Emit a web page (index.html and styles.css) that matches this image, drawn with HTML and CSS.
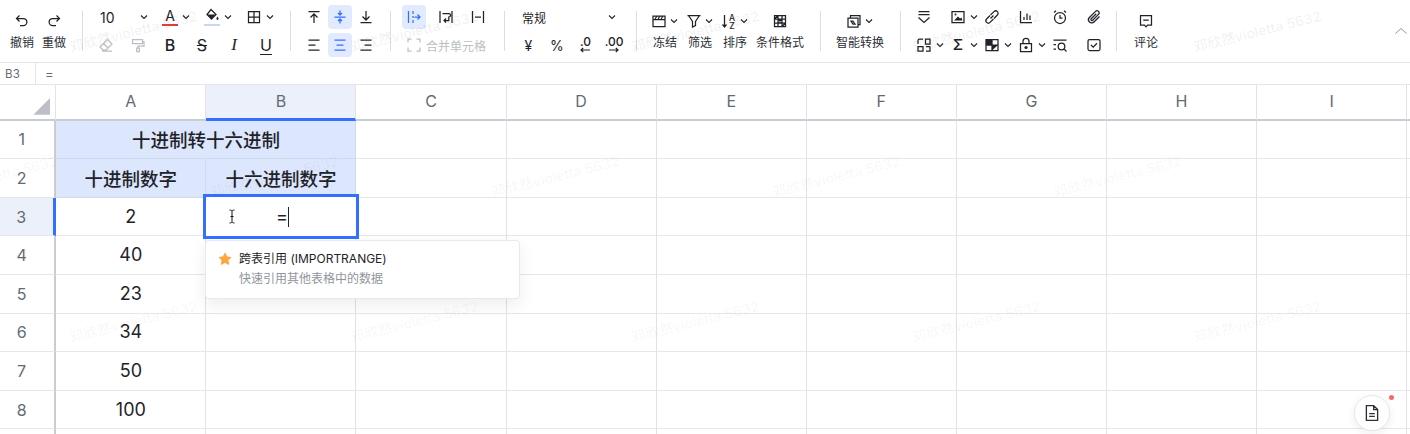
FILE: index.html
```html
<!DOCTYPE html>
<html lang="zh">
<head>
<meta charset="utf-8">
<title>十进制转十六进制</title>
<link rel="stylesheet" href="styles.css">
</head>
<body>
<svg class="defs" aria-hidden="true">
  <symbol id="chev" viewBox="0 0 10 10"><path d="M2 3.500 5 6.500 8 3.500"/></symbol>
  <symbol id="undo" viewBox="0 0 16 16"><path d="M5.500 2.500 2.500 5.500l3 3M3 5.500h6.300a3.600 3.600 0 0 1 0 7.200H6"/></symbol>
  <symbol id="redo" viewBox="0 0 16 16"><path d="M10.500 2.500l3 3-3 3M13 5.500H6.700a3.600 3.600 0 0 0 0 7.200H10"/></symbol>
  <symbol id="bucket" viewBox="0 0 16 16"><path d="M7 1.500 12 6.500 7.500 11 3 6.500z"/><path class="solid" d="M3.500 6.500h8L7.500 10.500z"/><path class="solid" d="M13.500 8.500c.8 1.200 1.100 1.800 1.100 2.300a1.100 1.100 0 0 1-2.200 0c0-.5.300-1.100 1.100-2.300z"/></symbol>
  <symbol id="grid" viewBox="0 0 16 16"><path d="M2.500 2.500h11v11h-11zM8 2.500v11M2.500 8h11"/></symbol>
  <symbol id="eraser" viewBox="0 0 16 16"><path d="M9.500 2.500 14 7l-6 6H5L2 10zM5.500 6.500l4.500 4.500M4 14h10"/></symbol>
  <symbol id="painter" viewBox="0 0 16 16"><path d="M2.500 2.500h10v4h-10zM12.500 4.500h1.500v4.500H8v2M6.700 11h2.600v3.500H6.700z"/></symbol>
  <symbol id="a-top" viewBox="0 0 16 16"><path d="M2.500 2.500h11M8 14V5M4.500 8.500 8 5l3.500 3.500"/></symbol>
  <symbol id="a-mid" viewBox="0 0 16 16"><path d="M2.500 8h11M8 1.500V6M6 4l2 2 2-2M8 14.500V10M6 12l2-2 2 2"/></symbol>
  <symbol id="a-bot" viewBox="0 0 16 16"><path d="M2.500 13.500h11M8 2v9M4.500 7.500 8 11l3.500-3.500"/></symbol>
  <symbol id="t-left" viewBox="0 0 16 16"><path d="M2.500 3h11M2.500 8h7M2.500 13h11"/></symbol>
  <symbol id="t-center" viewBox="0 0 16 16"><path d="M2.500 3h11M4.500 8h7M2.500 13h11"/></symbol>
  <symbol id="t-right" viewBox="0 0 16 16"><path d="M2.500 3h11M6.500 8h7M2.500 13h11"/></symbol>
  <symbol id="overflow" viewBox="0 0 16 16"><path d="M2.500 2v12M7 2v3M7 7v2M7 11v3M8.500 8h5.500M11.500 5.500 14 8l-2.500 2.500"/></symbol>
  <symbol id="wrap" viewBox="0 0 16 16"><path d="M2 2v12M14 2v12M4.500 4.500h6.300a1.700 1.700 0 0 1 0 3.500V11.500H6M8 9.500 6 11.500l2 2"/></symbol>
  <symbol id="clip" viewBox="0 0 16 16"><path d="M2.500 2v12M13.500 2v12M5 8h6"/></symbol>
  <symbol id="merge" viewBox="0 0 16 16"><path d="M2 5.500V2h3.500M10.500 2H14v3.500M2 10.500V14h3.500M14 10.500V14h-3.500"/></symbol>
  <symbol id="arr-left" viewBox="0 0 12 6"><path d="M11 3H2M4.200 1 2 3l2.200 2"/></symbol>
  <symbol id="arr-right" viewBox="0 0 12 6"><path d="M1 3h9M7.800 1 10 3 7.800 5"/></symbol>
  <symbol id="freeze" viewBox="0 0 16 16"><path d="M2 3h12v10.500H2zM2 6.500h12M4 6l2-3M7 6l2-3M10 6l2-3"/></symbol>
  <symbol id="filter" viewBox="0 0 16 16"><path d="M1.500 2.500h13M2.500 2.500 6.500 8.500v5.500l3-1.500V8.500l4-6"/></symbol>
  <symbol id="cond" viewBox="0 0 16 16"><path d="M2.500 2.500h11v11h-11zM6 2.500v11M10 2.500v11M2.500 6h11M2.500 10h11M6 6l4 4M10 6l-4 4M2.500 6 6 2.500M10 13.500l3.500-3.500"/></symbol>
  <symbol id="smart" viewBox="0 0 16 16"><path d="M2 5h10v9H2zM4.500 5V2.500H14V11.500H12"/><path d="M5 8h2l2 3h-2z"/></symbol>
  <symbol id="fold" viewBox="0 0 16 16"><path d="M2.500 2.500h11M2.500 5.500h11M2.500 8.500l5.500 5 5.500-5"/></symbol>
  <symbol id="image" viewBox="0 0 16 16"><path d="M2 2.500h12v11H2z"/><path class="solid" d="M4 11.500 8 7.500l2 2 1.500-1 1 3z"/><circle class="solid" cx="5.500" cy="5.500" r="1"/></symbol>
  <symbol id="link" viewBox="0 0 16 16"><path d="M6.500 6 10 2.600a2.400 2.400 0 0 1 3.400 3.400L10 9.500M9.500 10 6 13.400A2.400 2.400 0 0 1 2.600 10L6 6.500M6.500 9.500 9.500 6.500"/></symbol>
  <symbol id="chart" viewBox="0 0 16 16"><path d="M2.500 2v11.500h11.500M6 11V8M9 11V4.500M12 11V6.500"/></symbol>
  <symbol id="alarm" viewBox="0 0 16 16"><circle cx="8" cy="9" r="5.500"/><path d="M8 6v3h2.500M2 3.500 4 1.800M14 3.500 12 1.800"/></symbol>
  <symbol id="clip-file" viewBox="0 0 16 16"><path d="M13.500 7.500 8 13a3.200 3.200 0 0 1-4.600-4.500L9.500 2.400a2.100 2.100 0 0 1 3 3L6.700 11.200a1 1 0 0 1-1.500-1.400L10.300 4.700"/></symbol>
  <symbol id="blocks" viewBox="0 0 16 16"><path d="M2 9.500h5v4.500H2zM10 9.500h4M14 9.500V14h-4M9.500 7V2H14v5zM2 7V3.500A1.500 1.500 0 0 1 3.500 2H7"/></symbol>
  <symbol id="check-grid" viewBox="0 0 16 16"><path d="M2 2.500h12v11H2zM8 2.500v11M2 8h12"/><path class="solid" d="M2 2.500h6V8H2zM8 8h6l-6 5.500z"/></symbol>
  <symbol id="lock" viewBox="0 0 16 16"><path d="M2.500 6.500h11v8h-11zM5 6.500V4.300a3 3 0 0 1 6 0v2.200"/><circle class="solid" cx="8" cy="10.500" r="1.600"/></symbol>
  <symbol id="find" viewBox="0 0 16 16"><path d="M1.500 3h13M1.500 7.500h2.500M1.500 12h2.500M12.300 12.300l2.200 2.200"/><circle cx="9.500" cy="9.500" r="3.300"/></symbol>
  <symbol id="checkbox" viewBox="0 0 16 16"><rect x="2" y="2.500" width="12" height="11" rx="1.500"/><path d="M5 8l2.200 2.200L11 6.300"/></symbol>
  <symbol id="comment" viewBox="0 0 16 16"><path d="M2.500 2.500h11v9.500H9.500L8 13.800 6.500 12h-4zM5.200 7.200h5.600"/></symbol>
  <symbol id="up" viewBox="0 0 14 14"><path d="M1.500 9.500 7 4.500l5.500 5"/></symbol>
  <symbol id="doc" viewBox="0 0 16 16"><path d="M3 1.500h6.500L13 5v9.500H3zM9.500 1.500V5H13M5.500 8.500h5M5.500 11h5"/></symbol>
  <symbol id="star" viewBox="0 0 16 16"><path class="star-fill" d="M8 1.200l2.100 4.300 4.700.7-3.400 3.300.8 4.700L8 12l-4.200 2.200.8-4.700L1.200 6.200l4.700-.7z"/></symbol>
  <symbol id="ibeam" viewBox="0 0 10 16"><path d="M2.500 1.500c1.500 0 2 .3 2.500 1 .5-.7 1-1 2.500-1M5 2.500v11M2.500 14.500c1.500 0 2-.3 2.500-1 .5.700 1 1 2.500 1M3.500 8h3"/></symbol>
</svg>

<div class="app">
  <header class="toolbar">
    <div class="group g-history labeled">
      <div class="cmd"><span class="cmd-icon"><svg class="i"><use href="#undo"/></svg></span><span class="cmd-label">撤销</span></div>
      <div class="cmd"><span class="cmd-icon"><svg class="i"><use href="#redo"/></svg></span><span class="cmd-label">重做</span></div>
    </div>
    <i class="sep"></i>
    <div class="group g-font rows">
      <div class="row">
        <div class="font-size"><span>10</span><svg class="chev"><use href="#chev"/></svg></div>
        <div class="pick"><span class="color-a">A</span><svg class="chev"><use href="#chev"/></svg></div>
        <div class="pick"><span class="fill"><svg class="i"><use href="#bucket"/></svg></span><svg class="chev"><use href="#chev"/></svg></div>
        <div class="pick"><svg class="i"><use href="#grid"/></svg><svg class="chev"><use href="#chev"/></svg></div>
      </div>
      <div class="row">
        <div class="btn w32 muted"><svg class="i"><use href="#eraser"/></svg></div>
        <div class="btn w32 muted"><svg class="i"><use href="#painter"/></svg></div>
        <div class="btn w32 fmt bold">B</div>
        <div class="btn w32 fmt strike">S</div>
        <div class="btn w32 fmt ital">I</div>
        <div class="btn w32 fmt under">U</div>
      </div>
    </div>
    <i class="sep"></i>
    <div class="group g-align rows">
      <div class="row gap2">
        <div class="btn"><svg class="i"><use href="#a-top"/></svg></div>
        <div class="btn on"><svg class="i"><use href="#a-mid"/></svg></div>
        <div class="btn"><svg class="i"><use href="#a-bot"/></svg></div>
      </div>
      <div class="row gap2">
        <div class="btn"><svg class="i"><use href="#t-left"/></svg></div>
        <div class="btn on"><svg class="i"><use href="#t-center"/></svg></div>
        <div class="btn"><svg class="i"><use href="#t-right"/></svg></div>
      </div>
    </div>
    <i class="sep"></i>
    <div class="group g-wrap rows">
      <div class="row gap8">
        <div class="btn on"><svg class="i"><use href="#overflow"/></svg></div>
        <div class="btn"><svg class="i"><use href="#wrap"/></svg></div>
        <div class="btn"><svg class="i"><use href="#clip"/></svg></div>
      </div>
      <div class="row">
        <div class="btn muted"><svg class="i"><use href="#merge"/></svg></div>
        <span class="merge-label">合并单元格</span>
      </div>
    </div>
    <i class="sep"></i>
    <div class="group g-number rows">
      <div class="row">
        <div class="num-format"><span>常规</span><svg class="chev"><use href="#chev"/></svg></div>
      </div>
      <div class="row">
        <div class="btn w-num sym">¥</div>
        <div class="btn w-num sym">%</div>
        <div class="btn w-num dec"><span>.0</span><svg class="arr"><use href="#arr-left"/></svg></div>
        <div class="btn w-num dec"><span>.00</span><svg class="arr"><use href="#arr-right"/></svg></div>
      </div>
    </div>
    <i class="sep"></i>
    <div class="group g-data labeled">
      <div class="cmd w35"><span class="cmd-icon"><svg class="i"><use href="#freeze"/></svg><svg class="chev"><use href="#chev"/></svg></span><span class="cmd-label">冻结</span></div>
      <div class="cmd w35"><span class="cmd-icon"><svg class="i"><use href="#filter"/></svg><svg class="chev"><use href="#chev"/></svg></span><span class="cmd-label">筛选</span></div>
      <div class="cmd w35"><span class="cmd-icon"><svg class="i" viewBox="0 0 16 16"><path d="M3.500 2v12M1.500 11.500 3.500 14l2-2.500"/><text class="sort-letter" x="11" y="7.500">A</text><text class="sort-letter" x="11" y="15.500">Z</text></svg><svg class="chev"><use href="#chev"/></svg></span><span class="cmd-label">排序</span></div>
      <div class="cmd w55"><span class="cmd-icon"><svg class="i"><use href="#cond"/></svg></span><span class="cmd-label">条件格式</span></div>
    </div>
    <i class="sep"></i>
    <div class="group g-smart labeled">
      <div class="cmd w-full"><span class="cmd-icon"><svg class="i"><use href="#smart"/></svg><svg class="chev"><use href="#chev"/></svg></span><span class="cmd-label">智能转换</span></div>
    </div>
    <i class="sep"></i>
    <div class="group g-insert rows">
      <div class="row">
        <div class="ins"><svg class="i"><use href="#fold"/></svg></div>
        <div class="ins"><svg class="i"><use href="#image"/></svg><svg class="chev"><use href="#chev"/></svg></div>
        <div class="ins"><svg class="i"><use href="#link"/></svg></div>
        <div class="ins"><svg class="i"><use href="#chart"/></svg></div>
        <div class="ins"><svg class="i"><use href="#alarm"/></svg></div>
        <div class="ins"><svg class="i"><use href="#clip-file"/></svg></div>
      </div>
      <div class="row">
        <div class="ins"><svg class="i"><use href="#blocks"/></svg><svg class="chev"><use href="#chev"/></svg></div>
        <div class="ins"><span class="sigma">Σ</span><svg class="chev"><use href="#chev"/></svg></div>
        <div class="ins"><svg class="i"><use href="#check-grid"/></svg><svg class="chev"><use href="#chev"/></svg></div>
        <div class="ins"><svg class="i"><use href="#lock"/></svg><svg class="chev"><use href="#chev"/></svg></div>
        <div class="ins"><svg class="i"><use href="#find"/></svg></div>
        <div class="ins"><svg class="i"><use href="#checkbox"/></svg></div>
      </div>
    </div>
    <i class="sep"></i>
    <div class="group g-comment labeled">
      <div class="cmd w-full"><span class="cmd-icon"><svg class="i"><use href="#comment"/></svg></span><span class="cmd-label">评论</span></div>
    </div>
    <svg class="collapse"><use href="#up"/></svg>
  </header>

  <div class="formula">
    <div class="name-box">B3</div>
    <div class="formula-text">=</div>
  </div>

  <main class="sheet">
    <div class="corner"><i class="corner-mark"></i></div>
    <div class="col">A</div><div class="col col-on">B</div><div class="col">C</div><div class="col">D</div><div class="col">E</div><div class="col">F</div><div class="col">G</div><div class="col">H</div><div class="col">I</div><div class="col"></div>

    <div class="rh">1</div><div class="c head span2">十进制转十六进制</div><div class="c"></div><div class="c"></div><div class="c"></div><div class="c"></div><div class="c"></div><div class="c"></div><div class="c"></div><div class="c"></div>
    <div class="rh">2</div><div class="c head">十进制数字</div><div class="c head">十六进制数字</div><div class="c"></div><div class="c"></div><div class="c"></div><div class="c"></div><div class="c"></div><div class="c"></div><div class="c"></div><div class="c"></div>
    <div class="rh rh-on">3</div><div class="c">2</div><div class="c"></div><div class="c"></div><div class="c"></div><div class="c"></div><div class="c"></div><div class="c"></div><div class="c"></div><div class="c"></div><div class="c"></div>
    <div class="rh">4</div><div class="c">40</div><div class="c"></div><div class="c"></div><div class="c"></div><div class="c"></div><div class="c"></div><div class="c"></div><div class="c"></div><div class="c"></div><div class="c"></div>
    <div class="rh">5</div><div class="c">23</div><div class="c"></div><div class="c"></div><div class="c"></div><div class="c"></div><div class="c"></div><div class="c"></div><div class="c"></div><div class="c"></div><div class="c"></div>
    <div class="rh">6</div><div class="c">34</div><div class="c"></div><div class="c"></div><div class="c"></div><div class="c"></div><div class="c"></div><div class="c"></div><div class="c"></div><div class="c"></div><div class="c"></div>
    <div class="rh">7</div><div class="c">50</div><div class="c"></div><div class="c"></div><div class="c"></div><div class="c"></div><div class="c"></div><div class="c"></div><div class="c"></div><div class="c"></div><div class="c"></div>
    <div class="rh">8</div><div class="c">100</div><div class="c"></div><div class="c"></div><div class="c"></div><div class="c"></div><div class="c"></div><div class="c"></div><div class="c"></div><div class="c"></div><div class="c"></div>
    <div class="rh"></div><div class="c"></div><div class="c"></div><div class="c"></div><div class="c"></div><div class="c"></div><div class="c"></div><div class="c"></div><div class="c"></div><div class="c"></div><div class="c"></div>
  </main>

  <div class="editor">
    <svg class="ibeam"><use href="#ibeam"/></svg>
    <span class="editor-text">=</span><i class="caret"></i>
  </div>

  <div class="suggest">
    <div class="suggest-title"><svg class="star"><use href="#star"/></svg><span>跨表引用 (IMPORTRANGE)</span></div>
    <div class="suggest-sub">快速引用其他表格中的数据</div>
  </div>

  <div class="fab">
    <svg class="fab-icon"><use href="#doc"/></svg>
    <i class="fab-dot"></i>
  </div>

  <div class="watermarks" aria-hidden="true">
    <div class="wm-row wm-a wm-top"><span>邓欣然violetta 5632</span><span>邓欣然violetta 5632</span><span>邓欣然violetta 5632</span><span>邓欣然violetta 5632</span><span>邓欣然violetta 5632</span></div>
    <div class="wm-row wm-b"><span>邓欣然violetta 5632</span><span>邓欣然violetta 5632</span><span>邓欣然violetta 5632</span><span>邓欣然violetta 5632</span><span>邓欣然violetta 5632</span></div>
    <div class="wm-row wm-a"><span>邓欣然violetta 5632</span><span>邓欣然violetta 5632</span><span>邓欣然violetta 5632</span><span>邓欣然violetta 5632</span><span>邓欣然violetta 5632</span></div>
  </div>
</div>
</body>
</html>
```

FILE: styles.css
```css
* { box-sizing: border-box; }
html, body { margin: 0; padding: 0; background: #fff; }
body {
  width: 1410px; height: 434px; overflow: hidden;
  font-family: Inter, "Noto Sans CJK SC", "Liberation Sans", sans-serif;
  color: #1f2329;
}
.defs { position: absolute; width: 0; height: 0; }
.app { position: relative; width: 1410px; height: 434px; overflow: hidden; }

/* toolbar */
.toolbar { display: flex; height: 63px; border-bottom: 1px solid #e4e5e8; background: #fff; }
.sep { flex: none; width: 1px; height: 40px; margin-top: 11px; background: #dcdee1; }
.group { flex: none; }
.i { width: 16px; height: 16px; flex: none; fill: none; stroke: #1f2329; stroke-width: 1.25; }
.chev { width: 10px; height: 10px; flex: none; fill: none; stroke: #1f2329; stroke-width: 1.1; }
.solid { fill: #1f2329; stroke: none; }

.labeled { display: flex; padding-top: 12px; }
.cmd { display: flex; flex-direction: column; align-items: center; width: 32px; flex: none; }
.cmd-icon { display: flex; align-items: center; justify-content: center; gap: 2px; height: 18px; }
.cmd-label { margin-top: 5px; font-size: 12px; line-height: 16px; color: #2b2f36; white-space: nowrap; }
.w35 { width: 35px; }
.w55 { width: 55px; }
.w-full { width: 100%; }

.rows { display: flex; flex-direction: column; gap: 4px; padding-top: 5px; }
.row { display: flex; height: 24px; align-items: center; }
.gap2 { gap: 2px; }
.gap8 { gap: 8px; }
.btn {
  display: flex; align-items: center; justify-content: center;
  width: 24px; height: 24px; border-radius: 4px; flex: none; font-size: 15px;
}
.w32 { width: 32px; }
.w-num { width: 28.6px; }
.on { background: #e1eaff; }
.on .i { stroke: #3370ff; }
.muted .i { stroke: #bbbfc4; }

.g-history { width: 82px; padding-left: 6px; }
.g-font { width: 207px; padding-left: 7px; }
.g-align { width: 99px; padding-left: 11px; }
.g-wrap { width: 113px; padding-left: 11px; }
.g-number { width: 131px; padding-left: 9px; }
.g-data { width: 183px; padding-left: 10.5px; }
.g-smart { width: 79px; padding-right: 1px; }
.g-insert { width: 215px; padding-left: 6px; }
.g-comment { width: 58px; }

.font-size {
  display: flex; align-items: center; justify-content: space-between;
  width: 64px; padding: 0 5px 0 10px; font-size: 14px;
}
.pick { display: flex; align-items: center; gap: 3px; width: 42px; padding-left: 8px; flex: none; }
.color-a {
  width: 16px; height: 18px; flex: none; text-align: center;
  font-size: 14px; line-height: 15px; border-bottom: 2px solid #e03e3e;
}
.fill { display: block; width: 16px; height: 18px; flex: none; border-bottom: 2px solid #c9d6f3; }
.fmt { font-size: 16px; color: #1f2329; }
.bold { font-weight: 500; }
.strike { text-decoration: line-through; text-decoration-thickness: 1px; }
.ital { font-style: italic; font-family: "Liberation Serif", serif; font-size: 17px; }
.under { text-decoration: underline; text-underline-offset: 3px; text-decoration-thickness: 1px; }

.merge-label { font-size: 12px; color: #bbbfc4; white-space: nowrap; }

.num-format {
  display: flex; align-items: center; justify-content: space-between;
  width: 122px; padding: 0 19px 0 8px; font-size: 12px;
}
.sym { font-size: 14px; }
.dec { flex-direction: column; font-size: 12px; font-weight: 500; line-height: 10px; }
.arr { width: 12px; height: 6px; fill: none; stroke: #1f2329; stroke-width: 1.2; }
.sort-letter { font-family: Inter, sans-serif; font-size: 8.500px; font-weight: 500; text-anchor: middle; fill: #1f2329; stroke: none; }

.ins { display: flex; align-items: center; gap: 3px; width: 34px; padding-left: 9px; flex: none; }
.sigma { width: 16px; flex: none; text-align: center; font-size: 15px; font-weight: 500; line-height: 16px; }

.collapse { width: 14px; height: 14px; margin: 24px 2px 0 auto; fill: none; stroke: #8f959e; stroke-width: 1; }

/* formula bar */
.formula { display: flex; height: 21px; background: #fff; }
.name-box {
  width: 36px; border-right: 1px solid #e4e5e8;
  padding-left: 5px; font-size: 11.500px; line-height: 22px; color: #646a73; letter-spacing: .3px;
}
.formula-text { padding-left: 9px; font-size: 13px; line-height: 22px; color: #646a73; }

/* sheet */
.sheet {
  display: grid;
  grid-template-columns: 56.300px repeat(9, 150.100px) 10px;
  grid-template-rows: 35.700px repeat(9, 38.600px);
  border-top: 1px solid #e4e5e8;
  background: #fff;
}
.corner {
  display: flex; align-items: flex-end; justify-content: flex-end;
  padding: 0 5px 4px 0;
  border-right: 1px solid #e4e5e8; border-bottom: 2px solid #c9ccd3;
}
.corner-mark {
  width: 17px; height: 17px; background: #bcbfc8;
  clip-path: polygon(100% 0, 100% 100%, 0 100%);
}
.col {
  display: flex; align-items: center; justify-content: center;
  padding-bottom: 1px; font-size: 16px; color: #646a73;
  border-right: 1px solid #e1e2e6; border-bottom: 2px solid #c9ccd3;
}
.col-on { background: #ecf0fa; border-bottom: 3px solid #3370ff; }
.rh {
  display: flex; align-items: center; justify-content: center;
  padding-right: 11px; font-size: 16px; color: #646a73;
  border-right: 2px solid #c9ccd3; border-bottom: 1px solid #e6e7ea;
}
.rh-on { background: #ecf0fa; border-right: 3px solid #3370ff; }
.c {
  display: flex; align-items: center; justify-content: center;
  padding-bottom: 1px; font-size: 18px; color: #1f2329;
  border-right: 1px solid #e1e2e6; border-bottom: 1px solid #e6e7ea;
}
.head { background: #dce6fd; font-size: 18.500px; font-weight: 500; border-color: #cfd9ef; }
.span2 { grid-column: span 2; }

/* cell editor */
.editor {
  position: absolute; left: 203px; top: 194px; width: 156px; height: 45px;
  display: flex; align-items: center;
  padding-left: 21px; background: #fff; border: 3px solid #3370ff;
}
.ibeam { width: 10px; height: 17px; fill: none; stroke: #111; stroke-width: 1; flex: none; }
.editor-text { margin-left: 39px; font-size: 18px; color: #1f2329; }
.caret { display: block; width: 1px; height: 20px; background: #1f2329; }

/* suggestion popover */
.suggest {
  position: absolute; left: 205px; top: 240px; width: 315px; height: 59px;
  padding: 9px 12px; background: #fff; border: 1px solid #e8e9eb; border-radius: 4px;
  box-shadow: 0 6px 16px rgba(31, 35, 41, .08);
}
.suggest-title { display: flex; align-items: center; gap: 7px; font-size: 12px; line-height: 18px; }
.star { width: 14px; height: 14px; flex: none; }
.star-fill { fill: #ffa53d; stroke: #ffa53d; stroke-width: 1; stroke-linejoin: round; }
.suggest-sub { margin-top: 2px; padding-left: 21px; font-size: 12px; line-height: 18px; color: #8f959e; }

/* floating help button */
.fab {
  position: absolute; left: 1354px; top: 395px; width: 36px; height: 36px;
  display: flex; align-items: center; justify-content: center;
  background: #fff; border: 1px solid #e6e7ea; border-radius: 50%;
  box-shadow: 0 3px 8px rgba(31, 35, 41, .08);
}
.fab-icon { width: 18px; height: 18px; fill: none; stroke: #2b2f36; stroke-width: 1.2; }
.fab-dot {
  position: absolute; right: -5px; top: -1px; width: 5px; height: 5px;
  border-radius: 50%; background: #f76964;
}

/* watermark */
.watermarks {
  position: absolute; inset: 0; pointer-events: none;
  display: flex; flex-direction: column;
  padding-top: 22px; gap: 123px;
}
.wm-row { display: flex; height: 22px; }
.wm-a { padding-left: 68px; }
.wm-b { margin-left: -72px; }
.wm-row span {
  flex: none; width: 281px; font-size: 14px; font-weight: 600; white-space: nowrap;
  color: rgba(31, 35, 41, .035); transform: rotate(-14deg); transform-origin: 60px 10px;
}
.wm-top span { color: rgba(31, 35, 41, .06); }
```
